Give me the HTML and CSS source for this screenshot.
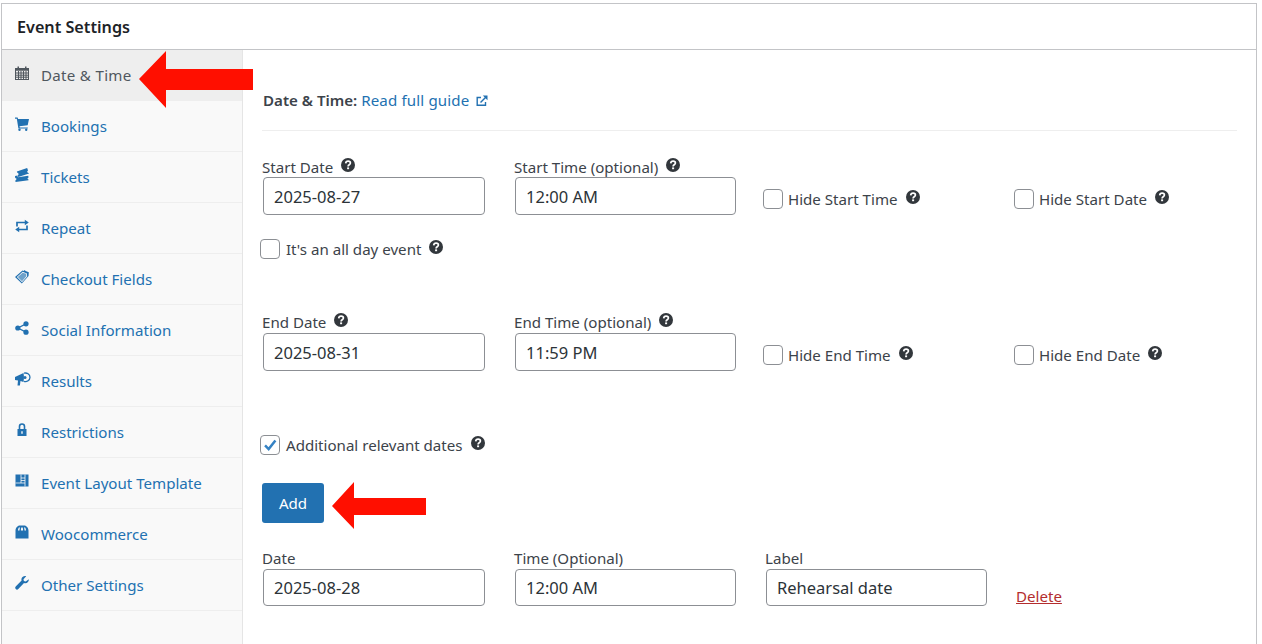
FILE: index.html
```html
<!DOCTYPE html>
<html lang="en">
<head>
<meta charset="utf-8">
<title>Event Settings</title>
<link rel="stylesheet" href="styles.css">
</head>
<body>
<svg class="sprite" aria-hidden="true">
  <symbol id="help" viewBox="0 0 14 14">
    <circle cx="7" cy="7" r="7" fill="currentColor"/>
    <path d="M4.700 5.400C4.800 4 5.800 3.200 7.100 3.200c1.300 0 2.300.8 2.300 1.900 0 1.800-2.300 1.600-2.300 3.300" fill="none" stroke="#fff" stroke-width="1.700"/>
    <rect x="6.100" y="9.400" width="2" height="1.800" fill="#fff"/>
  </symbol>
</svg>
<div class="page">
  <section class="panel">
    <h2 class="title">Event Settings</h2>
    <div class="body">
      <nav class="side">
        <a class="item active"><svg class="ico" viewBox="0 0 14 14"><path fill="currentColor" fill-rule="evenodd" d="M0 2h2.500V.5H4V2h6V.5h1.500V2H14v12H0zM1 4.800v8.200h12V4.800z"/><path stroke="currentColor" stroke-width="1" d="M1 7h12M1 9.200h12M1 11.200h12M3.500 5v8M6 5v8M8.500 5v8M11 5v8"/></svg>Date &amp; Time</a>
        <a class="item"><svg class="ico" viewBox="0 0 14 14"><path fill="currentColor" d="M0 .5h2.600l.5 1.500H14l-1.300 6.300-8.200.9.300 1.200h8v1.200H3.400L1.800 1.700H0z"/><circle cx="4.500" cy="12.800" r="1.200" fill="currentColor"/><circle cx="11.200" cy="12.800" r="1.200" fill="currentColor"/></svg>Bookings</a>
        <a class="item"><svg class="ico ico-wide" viewBox="0 0 16 15"><path fill="currentColor" d="M2.500 3.800 13.500 0l1 2.600-1 .8.600 1.800 1.100.1.300.7-11.500 3.600-.6-1.800 1-.8-.6-1.800-1 0z"/><path fill="currentColor" d="M.5 8.500 3 8l.7 2 11-1.800.3 2-1 .7v1l1 .4v.9L1 15v-2l1-.6v-1.200l-1.300-.4z"/></svg>Tickets</a>
        <a class="item"><svg class="ico" viewBox="0 0 14 14"><path fill="none" stroke="currentColor" stroke-width="1.700" d="M2 7.500V3.500h8M12 6.500v4H4"/><path fill="currentColor" d="M9.800.8 13.800 3.500 9.800 6.200zM4.200 7.800.2 10.500l4 2.700z"/></svg>Repeat</a>
        <a class="item"><svg class="ico ico-wide" viewBox="0 0 15 15"><path fill="currentColor" fill-rule="evenodd" d="M0 7.500 8 .5l1.200.6L10.500 0l.8 1 3.500 1.500-.3 4-7.200 8zM8.200 2 2 7.500l5.500 5.500L13 7l-.2-3.200z"/><path fill="currentColor" opacity=".65" d="M3 7.500 8.200 3 12 4l.1 2.800L7.500 12z"/></svg>Checkout Fields</a>
        <a class="item"><svg class="ico" viewBox="0 0 14 14"><circle cx="2.800" cy="7" r="2.600" fill="currentColor"/><circle cx="11" cy="2.800" r="2.600" fill="currentColor"/><circle cx="11" cy="11.200" r="2.600" fill="currentColor"/><path d="M2.800 7 11 2.800M2.800 7 11 11.200" stroke="currentColor" stroke-width="1.300"/></svg>Social Information</a>
        <a class="item"><svg class="ico" viewBox="0 0 14 14"><path fill="currentColor" d="M0 5 8.500 1c.6 3 .6 6 0 9L5.500 9l-.6 4.500H2.500L3 8.600 0 8z"/><path d="M9 1.200a4.600 4.300 0 1 1 0 8.200" fill="none" stroke="currentColor" stroke-width="1.300"/><circle cx="10" cy="5.400" r="1.500" fill="currentColor"/></svg>Results</a>
        <a class="item"><svg class="ico" viewBox="0 0 14 14"><path fill="none" stroke="currentColor" stroke-width="1.600" d="M4.500 6V3.500a2.500 2.500 0 0 1 5 0V6"/><path fill="currentColor" fill-rule="evenodd" d="M2.500 6h9v7h-9zM6.300 8.300v2.500h1.400V8.300z"/></svg>Restrictions</a>
        <a class="item"><svg class="ico" viewBox="0 0 14 14"><rect x=".5" y=".5" width="13" height="12" fill="currentColor"/><path fill="none" stroke="#f9f9f9" stroke-width=".8" d="M6 .5V9M.5 9H10M10 .5V12.500M6 4h4M6 6.500h4"/></svg>Event Layout Template</a>
        <a class="item"><svg class="ico" viewBox="0 0 14 14"><path fill="currentColor" fill-rule="evenodd" d="M.5 5.500C.5 2.500 3 .5 5 .5h4c2 0 4.500 2 4.500 5v8H.5zM4 2.500c-.7.700-1 2-1 3h1.500c0-1 .1-2.200.5-3zM6.300 2.500c-.3.800-.4 2-.4 3h2.200c0-1-.1-2.200-.4-3zM9 2.500c.4.800.5 2 .5 3H11c0-1-.3-2.300-1-3z"/></svg>Woocommerce</a>
        <a class="item"><svg class="ico" viewBox="0 0 14 14"><path fill="currentColor" d="M13.800 3.200c.3 2-1.300 4.100-3.500 4.100-.5 0-.9-.1-1.300-.2L3.300 13a1.800 1.800 0 0 1-2.600-.1 1.800 1.800 0 0 1 0-2.500l5.900-5.800c-.7-2 .8-4.400 3.300-4.500.5 0 1 .1 1.300.2L8.500 3.200l.4 1.800 1.800.4z"/></svg>Other Settings</a>
      </nav>
      <main class="content">
        <p class="guide"><strong>Date &amp; Time:</strong> <a class="link">Read full guide</a> <svg class="ext" viewBox="0 0 12 12"><path fill="none" stroke="currentColor" stroke-width="1.400" d="M9.500 7v3.300H1.200V2.500H5"/><path fill="none" stroke="currentColor" stroke-width="1.500" d="M4.500 7.500 10.500 1.500"/><path fill="currentColor" d="M6.800.500H11.500V5.200z"/></svg></p>
        <div class="row row-start">
          <div class="field"><label class="lbl">Start Date <svg class="help"><use href="#help"/></svg></label><input class="inp" value="2025-08-27"></div>
          <div class="field"><label class="lbl">Start Time (optional) <svg class="help"><use href="#help"/></svg></label><input class="inp" value="12:00 AM"></div>
          <label class="chk hide"><span class="box"></span>Hide Start Time <svg class="help"><use href="#help"/></svg></label>
          <label class="chk hide"><span class="box"></span>Hide Start Date <svg class="help"><use href="#help"/></svg></label>
        </div>
        <label class="chk allday"><span class="box"></span>It's an all day event <svg class="help"><use href="#help"/></svg></label>
        <div class="row row-end">
          <div class="field"><label class="lbl">End Date <svg class="help"><use href="#help"/></svg></label><input class="inp" value="2025-08-31"></div>
          <div class="field"><label class="lbl">End Time (optional) <svg class="help"><use href="#help"/></svg></label><input class="inp" value="11:59 PM"></div>
          <label class="chk hide"><span class="box"></span>Hide End Time <svg class="help"><use href="#help"/></svg></label>
          <label class="chk hide"><span class="box"></span>Hide End Date <svg class="help"><use href="#help"/></svg></label>
        </div>
        <label class="chk additional"><span class="box checked"><svg viewBox="0 0 20 20"><path d="M4.500 10.500 8.500 14.500 16 5" fill="none" stroke="#3582c4" stroke-width="2.800"/></svg></span>Additional relevant dates <svg class="help"><use href="#help"/></svg></label>
        <button class="btn" type="button">Add</button>
        <div class="row row-date">
          <div class="field"><label class="lbl">Date</label><input class="inp" value="2025-08-28"></div>
          <div class="field"><label class="lbl">Time (Optional)</label><input class="inp" value="12:00 AM"></div>
          <div class="field"><label class="lbl">Label</label><input class="inp" value="Rehearsal date"></div>
          <a class="del">Delete</a>
        </div>
      </main>
    </div>
  </section>
  <svg class="arrow arrow-one" viewBox="0 0 114 57"><path d="M0 28 27 0V18H114V39H27V57z"/></svg>
  <svg class="arrow arrow-two" viewBox="0 0 94 47"><path d="M0 24 22 0V16H94V33H22V47z"/></svg>
</div>
</body>
</html>
```
FILE: styles.css
```css
* { box-sizing: border-box; }
html, body { margin: 0; height: 100%; overflow: hidden; background: #fff; }
body { font-family: "Noto Sans", "Open Sans", sans-serif; font-size: 15.1px; color: #3c434a; }
.sprite { display: none; }
.page { position: relative; height: 644px; padding: 3px 5px 0 1px; }
.panel { height: 641px; border: 1px solid #c3c4c7; border-bottom: 0; background: #fff; }
.title { margin: 0; height: 46px; padding: 0 15px; font-size: 16.2px; line-height: 46px; font-weight: 600; color: #1d2327; border-bottom: 1px solid #c3c4c7; }
.body { display: flex; height: 594px; }
.side { width: 241px; flex: none; background: #f9f9f9; border-right: 1px solid #e5e5e5; }
.item { display: flex; align-items: center; height: 51px; padding: 0 0 0 13px; color: #2271b1; border-bottom: 1px solid #eee; }
.item.active { background: #eee; color: #50575e; letter-spacing: .3px; }
.ico { width: 14px; height: 14px; margin: -5px 12px 0 0; flex: none; overflow: visible; }
.ico-wide { width: 16px; margin-left: -1px; margin-right: 11px; }
.content { flex: 1; padding: 0 19px 0 19px; min-width: 0; }
.guide { margin: 0; padding: 40px 0 20px 1px; height: 81px; line-height: 20px; border-bottom: 1px solid #eee; }
.guide strong { font-weight: 600; }
.link { color: #2271b1; letter-spacing: .14px; }
.ext { width: 12px; height: 12px; margin-left: 3px; color: #2271b1; vertical-align: -1px; }
.row { display: grid; grid-template-columns: 252px 248px 251px 1fr; align-items: start; }
.row-start { margin-top: 26px; }
.row-end { margin-top: 54px; }
.row-date { margin-top: 26px; grid-template-columns: 252px 251px 251px 1fr; }
.lbl { display: block; height: 20px; line-height: 20px; white-space: nowrap; }
.row-end .lbl { line-height: 19px; }
.row-date .lbl { line-height: 18px; }
.help { width: 14px; height: 14px; margin-left: 4px; color: #32373c; vertical-align: 1px; }
.inp { display: block; width: 222px; height: 38px; margin-left: 1px; padding: 0 10px; font: inherit; font-size: 16.5px; color: #2c3338; border: 1px solid #8c8f94; border-radius: 4px; background: #fff; }
.field:nth-child(n+2) .inp { width: 221px; }
.row-date .inp { height: 37px; }
.chk { display: flex; align-items: center; height: 20px; line-height: 20px; white-space: nowrap; }
.chk .help { margin-left: 8px; margin-top: -4px; flex: none; }
.hide { margin-top: 32px; padding-left: 1px; }
.box { width: 20px; height: 20px; margin-right: 5px; flex: none; border: 1px solid #8c8f94; border-radius: 4px; background: #fff; }
.box svg { display: block; width: 18px; height: 18px; }
.allday { margin: 24px 0 0 -2px; }
.additional { margin: 64px 0 0 -2px; }
.allday .box, .additional .box { margin-right: 6px; }
.btn { display: block; width: 62px; height: 40px; margin: 28px 0 0; padding: 0; font: inherit; color: #fff; background: #2271b1; border: 0; border-radius: 3px; }
.del { margin: 37px 0 0 0; line-height: 20px; color: #b32d2e; text-decoration: underline; }
.arrow { position: absolute; fill: #ff0f00; }
.arrow-one { left: 139px; top: 51px; width: 114px; height: 57px; }
.arrow-two { left: 332px; top: 482px; width: 94px; height: 47px; }
```
